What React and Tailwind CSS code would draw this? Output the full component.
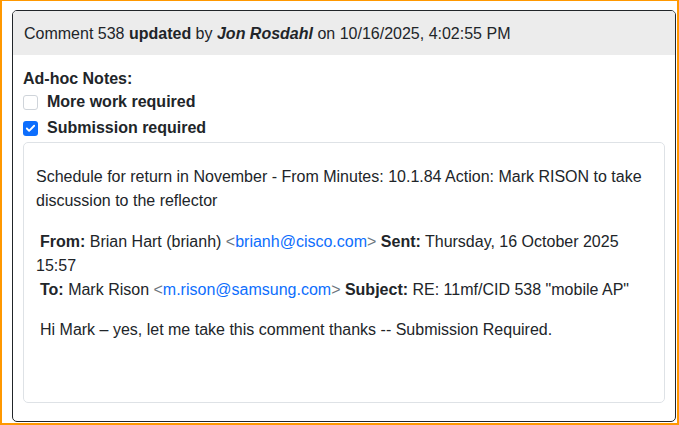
import { Check } from "lucide-react";

const Box = ({ checked, label, className = "" }) => (
  <div className={`flex items-center h-[24px] ${className}`}>
    {checked ? (
      <span className="w-[15px] h-[15px] rounded-[3px] bg-[#0d6efd] flex items-center justify-center">
        <Check size={11} strokeWidth={4} color="#fff" />
      </span>
    ) : (
      <span className="w-[15px] h-[15px] rounded-[3px] border border-[#cfd4da] bg-white" />
    )}
    <span className="ml-[9px] font-bold">{label}</span>
  </div>
);

const Lt = () => <span className="text-[#6c757d]">&lt;</span>;
const Gt = () => <span className="text-[#6c757d]">&gt;</span>;

const App = () => {
  return (
    <div
      className="w-[679px] h-[425px] border-l-2 border-t border-r-2 border-b-2 border-[#ff9800] bg-white pl-[10px] pt-[9px] pr-[1px] pb-[1px] text-[#212529] text-[16px] leading-[24px]"
      style={{ fontFamily: '"Liberation Sans", Arial, sans-serif' }}
    >
      <div className="h-[412px] w-[664px] border border-[#212529] rounded-[5px] overflow-hidden flex flex-col">
        <div className="bg-[#ececec] h-[44px] px-[11px] pt-[1px] flex items-center">
          <span>
            Comment 538 <b>updated</b> by <b><i>Jon Rosdahl</i></b> on 10/16/2025, 4:02:55 PM
          </span>
        </div>
        <div className="flex-1 px-[10px] pt-[11px] pb-[18px] flex flex-col">
          <div className="font-bold h-[24px] pt-[1px]">Ad-hoc Notes:</div>
          <Box label="More work required" />
          <Box checked label="Submission required" className="mt-[2px]" />
          <div className="mt-[2px] flex-1 border border-[#dee2e6] rounded-[5px] pl-[12px] pr-[12px] pt-[22px]">
            <p>
              Schedule for return in November - From Minutes: 10.1.84 Action: Mark RISON to take
              discussion to the reflector
            </p>
            <p className="mt-[17px] pl-[4px]">
              <b>From:</b> Brian Hart (brianh) <Lt />
              <span className="text-[#0d6efd]">brianh@cisco.com</span>
              <Gt /> <b>Sent:</b> Thursday, 16 October 2025
            </p>
            <p>15:57</p>
            <p className="pl-[4px]">
              <b>To:</b> Mark Rison <Lt />
              <span className="text-[#0d6efd]">m.rison@samsung.com</span>
              <Gt /> <b>Subject:</b> RE: 11mf/CID 538 "mobile AP"
            </p>
            <p className="mt-[16px] pl-[4px]">
              Hi Mark – yes, let me take this comment thanks -- Submission Required.
            </p>
          </div>
        </div>
      </div>
    </div>
  );
};

export default App;
